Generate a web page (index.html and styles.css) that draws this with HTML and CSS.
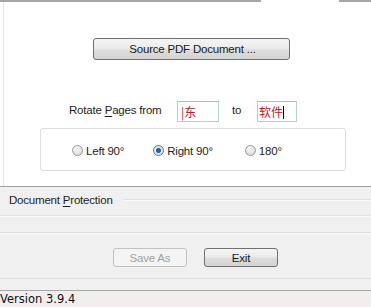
FILE: index.html
```html
<!DOCTYPE html>
<html lang="en">
  <head>
    <meta charset="UTF-8" />
    <meta name="viewport" content="width=device-width, initial-scale=1.0" />
    <title>PDF Rotate</title>
    <link rel="stylesheet" href="styles.css">
  </head>
  <body>
    <div class="panel">
      <span class="top-gap"></span>
      <button class="btn source-btn">Source PDF Document ...</button>

      <div class="range-row">
        <span class="label from-label">Rotate <u>P</u>ages from</span>
        <div class="field from-field">|东</div>
        <span class="label to-label">to</span>
        <div class="field to-field">软件<span class="caret"></span></div>
      </div>

      <div class="group-box">
        <label class="radio left"><span class="dot"></span>Left 90°</label>
        <label class="radio right checked"><span class="dot"></span>Right 90°</label>
        <label class="radio half"><span class="dot"></span>180°</label>
      </div>
    </div>

    <div class="protection">
      <span class="section-title">Document <u>P</u>rotection</span>
      <span class="section-line"></span>
    </div>
    <div class="spacer"></div>

    <div class="actions">
      <button class="btn small-btn" disabled>Save As</button>
      <button class="btn small-btn">Exit</button>
    </div>

    <div class="status">Version 3.9.4</div>
  </body>
</html>
```

FILE: styles.css
```css
body {
  margin: 0;
  background-color: #f0f0f0;
  font-family: "Liberation Sans", Arial, sans-serif;
  font-size: 11.5px;
  letter-spacing: -0.2px;
  color: #1e1e1e;
  width: 371px;
  height: 307px;
  overflow: hidden;
}

u {
  text-decoration: underline;
  text-underline-offset: 2px;
}

/* Upper white panel */
.panel {
  position: relative;
  height: 187px;
  box-sizing: border-box;
  background-color: #fff;
  border-top: 2px solid #a5a5a5;
  border-bottom: 1px solid #a0a0a0;
  padding-top: 36px;
  box-shadow: inset 3px 0 0 #fff, inset 4px 0 0 #e6e6e6;
}

.top-gap {
  position: absolute;
  top: -2px;
  left: 261px;
  width: 78px;
  height: 2px;
  background-color: #fff;
}

.btn {
  font-family: "Liberation Sans", Arial, sans-serif;
  font-size: 11.5px;
  letter-spacing: -0.2px;
  color: #1a1a1a;
  border: 1px solid #707070;
  border-radius: 3px;
  background: linear-gradient(#f4f4f4 0%, #ececec 45%, #dddddd 55%, #d4d4d4 100%);
  padding: 0;
}

.source-btn {
  display: block;
  margin-left: 93px;
  width: 197px;
  height: 22px;
  padding-left: 2px;
}

.range-row {
  display: flex;
  align-items: center;
  margin-top: 41px;
  height: 21px;
  padding-left: 69px;
}

.from-label {
  width: 108px;
  margin-top: -4px;
}

.to-label {
  width: 25px;
  margin-left: 13px;
  margin-top: -4px;
}

.field {
  box-sizing: border-box;
  height: 21px;
  border: 1px solid #b9cde0;
  border-top-color: #a8bcd2;
  background-color: #fff;
  color: #b3232b;
  font-family: "Noto Sans CJK SC", sans-serif;
  font-size: 12px;
  letter-spacing: 0;
  line-height: 19px;
  padding-left: 3px;
}

.from-field {
  width: 42px;
}

.to-field {
  width: 40px;
  padding-left: 1px;
}

.caret {
  display: inline-block;
  width: 1px;
  height: 13px;
  background-color: #000;
  vertical-align: -2px;
}

.group-box {
  display: flex;
  align-items: center;
  box-sizing: border-box;
  margin: 6px 0 0 40px;
  width: 306px;
  height: 43px;
  border: 1px solid #dcdcdc;
  border-radius: 3px;
  padding: 2px 0 0 31px;
}

.radio {
  display: flex;
  align-items: center;
}

.right {
  margin-left: 29px;
}

.half {
  margin-left: 32px;
}

.dot {
  box-sizing: border-box;
  width: 11px;
  height: 11px;
  margin-right: 3px;
  border-radius: 50%;
  border: 1px solid #9a9a9a;
  background: radial-gradient(circle at 40% 35%, #fafafa, #d0d0d0);
}

.checked .dot {
  border-color: #5d7a98;
  background: radial-gradient(circle, #2d6fa6 0, #1c5b92 2px, #e9eef3 3px, #cfd6dd 5px);
}

/* Lower part */
.protection {
  display: flex;
  align-items: center;
  height: 28px;
  padding-left: 9px;
  border-bottom: 1px solid #e3e3e3;
  box-shadow: 0 1px 0 #fafafa;
}

.section-title {
  margin-top: -2px;
}

.section-line {
  flex: 1;
  margin-left: 11px;
  margin-top: -3px;
  height: 1px;
  background-color: #e0e0e0;
  box-shadow: 0 1px 0 #fafafa;
}

.spacer {
  height: 16px;
  border-bottom: 1px solid #dcdcdc;
  box-shadow: 0 1px 0 #fafafa;
}

.actions {
  display: flex;
  height: 46px;
  box-sizing: border-box;
  padding: 15px 0 0 113px;
  gap: 17px;
  border-bottom: 1px solid #e2e2e2;
}

.small-btn {
  width: 74px;
  height: 19px;
}

.small-btn:disabled {
  color: #a0a0a0;
  border-color: #c2c2c2;
  background: #f4f4f4;
}

.status {
  margin-top: 11px;
  border-top: 1px solid #a8a8a8;
  height: 17px;
  line-height: 17px;
  background-color: #f1eeed;
  font-family: "DejaVu Sans", sans-serif;
  font-size: 11.5px;
  letter-spacing: 0;
  color: #111;
}
```
